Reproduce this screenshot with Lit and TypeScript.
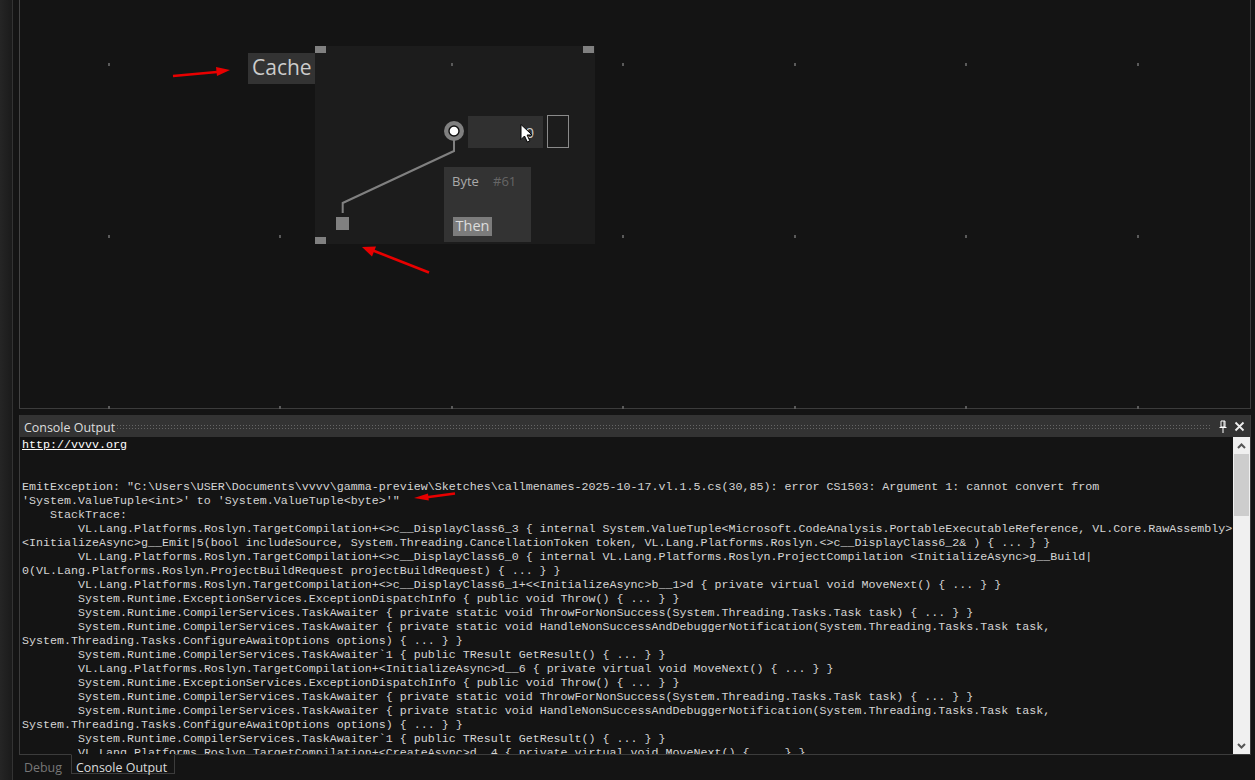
import { LitElement, html, css, svg } from "lit";
import { customElement } from "lit/decorators.js";

const LINES: [number, string][] = [
  [0, ""],
  [0, ""],
  [0, `EmitException: "C:\\Users\\USER\\Documents\\vvvv\\gamma-preview\\Sketches\\callmenames-2025-10-17.vl.1.5.cs(30,85): error CS1503: Argument 1: cannot convert from`],
  [0, `'System.ValueTuple<int>' to 'System.ValueTuple<byte>'"`],
  [4, `StackTrace:`],
  [8, `VL.Lang.Platforms.Roslyn.TargetCompilation+<>c__DisplayClass6_3 { internal System.ValueTuple<Microsoft.CodeAnalysis.PortableExecutableReference, VL.Core.RawAssembly>`],
  [0, `<InitializeAsync>g__Emit|5(bool includeSource, System.Threading.CancellationToken token, VL.Lang.Platforms.Roslyn.<>c__DisplayClass6_2& ) { ... } }`],
  [8, `VL.Lang.Platforms.Roslyn.TargetCompilation+<>c__DisplayClass6_0 { internal VL.Lang.Platforms.Roslyn.ProjectCompilation <InitializeAsync>g__Build|`],
  [0, `0(VL.Lang.Platforms.Roslyn.ProjectBuildRequest projectBuildRequest) { ... } }`],
  [8, `VL.Lang.Platforms.Roslyn.TargetCompilation+<>c__DisplayClass6_1+<<InitializeAsync>b__1>d { private virtual void MoveNext() { ... } }`],
  [8, `System.Runtime.ExceptionServices.ExceptionDispatchInfo { public void Throw() { ... } }`],
  [8, `System.Runtime.CompilerServices.TaskAwaiter { private static void ThrowForNonSuccess(System.Threading.Tasks.Task task) { ... } }`],
  [8, `System.Runtime.CompilerServices.TaskAwaiter { private static void HandleNonSuccessAndDebuggerNotification(System.Threading.Tasks.Task task,`],
  [0, `System.Threading.Tasks.ConfigureAwaitOptions options) { ... } }`],
  [8, `System.Runtime.CompilerServices.TaskAwaiter\`1 { public TResult GetResult() { ... } }`],
  [8, `VL.Lang.Platforms.Roslyn.TargetCompilation+<InitializeAsync>d__6 { private virtual void MoveNext() { ... } }`],
  [8, `System.Runtime.ExceptionServices.ExceptionDispatchInfo { public void Throw() { ... } }`],
  [8, `System.Runtime.CompilerServices.TaskAwaiter { private static void ThrowForNonSuccess(System.Threading.Tasks.Task task) { ... } }`],
  [8, `System.Runtime.CompilerServices.TaskAwaiter { private static void HandleNonSuccessAndDebuggerNotification(System.Threading.Tasks.Task task,`],
  [0, `System.Threading.Tasks.ConfigureAwaitOptions options) { ... } }`],
  [8, `System.Runtime.CompilerServices.TaskAwaiter\`1 { public TResult GetResult() { ... } }`],
  [8, `VL.Lang.Platforms.Roslyn.TargetCompilation+<CreateAsync>d__4 { private virtual void MoveNext() { ... } }`],
];

const XS = [108, 279, 451, 622, 794, 965, 1137];

@customElement("app-root")
export class AppRoot extends LitElement {
  static styles = css`
    :host { display: block; width: 1255px; height: 780px; background: #141414; overflow: hidden; position: relative; font-family: "Open Sans", "DejaVu Sans", sans-serif; }
    .page { display: flex; height: 780px; }
    .gutter { width: 12px; border-right: 1px solid #333; background: linear-gradient(90deg, #252525, #1b1b1b); flex: none; }
    .gap { width: 6px; flex: none; }
    .main { width: 1232px; flex: none; display: flex; flex-direction: column; }
    .canvas { height: 409px; flex: none; box-sizing: border-box; border-left: 1px solid #444; border-right: 1px solid #3c3c3c; border-bottom: 1px solid #3c3c3c; }
    .dot { position: absolute; width: 2px; height: 3px; background: #5a5a5a; }
    .panel { margin-top: 6px; height: 340px; flex: none; box-sizing: border-box; display: flex; flex-direction: column; border-left: 1px solid #3c3c3c; border-right: 1px solid #3c3c3c; border-bottom: 1px solid #3c3c3c; }
    .head { height: 22px; flex: none; background: #333; display: flex; align-items: center; padding-left: 4px; color: #ddd; font-size: 12.45px; }
    .title { padding-top: 2px; }
    .grip { flex: 1; height: 6px; margin: 1px 6px 0 1px; background-image: radial-gradient(#666 0.7px, transparent 0.8px); background-size: 3px 3px; }
    .headicons { display: flex; gap: 6px; align-items: center; padding-right: 5px; }
    .body { flex: 1; display: flex; min-height: 0; }
    .log { flex: 1; min-width: 0; overflow: hidden; padding: 1px 0 0 2px; font-family: "Liberation Mono", monospace; font-size: 11.67px; line-height: 14px; color: #d4d4d4; background: #141414; }
    .log a { color: #fff; text-decoration: underline; }
    .row { height: 14px; white-space: pre; }
    .bar { width: 17px; flex: none; background: #f0f0f0; display: flex; flex-direction: column; align-items: center; }
    .arrow { height: 17px; flex: none; display: flex; align-items: center; justify-content: center; }
    .thumb { align-self: stretch; margin: 0 1px; height: 62px; background: #cdcdcd; flex: none; }
    .spacer { flex: 1; }
    .tabs { display: flex; height: 20px; flex: none; font-size: 12.45px; }
    .tab { padding: 0 9px 0 5px; color: #777; line-height: 26px; width: 38px; box-sizing: content-box; }
    .tab.on { width: auto; color: #ddd; border: 1px solid #3c3c3c; border-top-color: #141414; margin-top: -1px; background: #141414; line-height: 26px; padding: 0 7px 0 4px; height: 18px; }
    .region { position: absolute; left: 315px; top: 46px; width: 280px; height: 198px; background: #1c1c1c; }
    .cache { position: absolute; background: #333; color: #ccc; left: 248px; top: 53px; width: 67px; height: 31px; font-size: 21px; line-height: 28px; padding-left: 4px; box-sizing: border-box; white-space: nowrap; }
    .handle { position: absolute; width: 11px; height: 7px; background: #808080; }
    .box { position: absolute; left: 468px; top: 116px; width: 75px; height: 32px; background: #303030; color: #ccc; font-size: 15px; line-height: 32px; text-align: right; padding-right: 9px; box-sizing: border-box; }
    .outline { position: absolute; left: 547px; top: 115px; width: 22px; height: 33px; box-sizing: border-box; border: 1px solid #8a8a8a; }
    .card { position: absolute; left: 444px; top: 167px; width: 87px; height: 75px; background: #333; font-size: 13px; color: #aaa; }
    .byte { position: absolute; left: 8px; top: 5px; }
    .num { position: absolute; left: 49px; top: 5px; color: #666; }
    .then { position: absolute; left: 9px; top: 50px; width: 39px; height: 19px; background: #7c7c7c; color: #ddd; font-size: 14.5px; line-height: 17px; text-align: center; }
    .wires { position: absolute; left: 0; top: 0; width: 1255px; height: 520px; pointer-events: none; }
  `;

  private dots() {
    const out = [];
    for (const y of [63, 235, 406]) {
      for (const x of XS) {
        out.push(html`<div class="dot" style="left:${x}px;top:${y}px"></div>`);
      }
    }
    return out;
  }

  render() {
    return html`
      <div class="page">
        <div class="gutter"></div>
        <div class="gap"></div>
        <div class="main">
          <div class="canvas"></div>
          <div class="panel">
            <div class="head">
              <span class="title">Console Output</span>
              <div class="grip"></div>
              <div class="headicons">
                <svg width="10" height="13" viewBox="0 0 10 13"><path d="M3 1h4v6H3zM1.5 7.5h7M5 8v5M6 1v6" fill="none" stroke="#fff" stroke-width="1"/></svg>
                <svg width="11" height="11" viewBox="0 0 11 11"><path d="M1.5 1.5l8 8M9.5 1.5l-8 8" fill="none" stroke="#eee" stroke-width="1.8"/></svg>
              </div>
            </div>
            <div class="body">
              <div class="log">
                <div class="row"><a>http://vvvv.org</a></div>
                ${LINES.map(([n, t]) => html`<div class="row">${" ".repeat(n)}${t}</div>`)}
              </div>
              <div class="bar">
                <div class="arrow"><svg width="9" height="6" viewBox="0 0 9 6"><path d="M1 5l3.5-3.5L8 5" fill="none" stroke="#555" stroke-width="2"/></svg></div>
                <div class="thumb"></div>
                <div class="spacer"></div>
                <div class="arrow"><svg width="9" height="6" viewBox="0 0 9 6"><path d="M1 1l3.5 3.5L8 1" fill="none" stroke="#555" stroke-width="2"/></svg></div>
              </div>
            </div>
          </div>
          <div class="tabs">
            <div class="tab">Debug</div>
            <div class="tab on">Console Output</div>
          </div>
        </div>
      </div>

      <div class="region"></div>
      ${this.dots()}
      <div class="handle" style="left:315px;top:46px"></div>
      <div class="handle" style="left:583px;top:46px"></div>
      <div class="handle" style="left:315px;top:237px"></div>
      <div class="cache">Cache</div>
      <div class="box">0</div>
      <div class="outline"></div>
      <div class="card">
        <span class="byte">Byte</span><span class="num">#61</span>
        <div class="then">Then</div>
      </div>
      <svg class="wires" viewBox="0 0 1255 520">
        ${svg`
          <path d="M454 140V151L342.7 203V213" fill="none" stroke="#808080" stroke-width="2"/>
          <circle cx="454" cy="131" r="10" fill="#808080"/>
          <circle cx="454" cy="131" r="5" fill="#fff" stroke="#111" stroke-width="1.4"/>
          <rect x="336" y="217" width="13" height="13" fill="#808080"/>
          <path d="M173 76l44-4" stroke="#e80000" stroke-width="2.6" fill="none"/>
          <path d="M230 70l-14-3 1 9z" fill="#e80000"/>
          <path d="M429 272.500l-56-22" stroke="#e80000" stroke-width="2.6" fill="none"/>
          <path d="M362 247l14-0.500-4 10z" fill="#e80000"/>
          <path d="M455 493.500l-30 4" stroke="#e80000" stroke-width="2.4" fill="none"/>
          <path d="M414 498l14-4.500 0.800 7z" fill="#e80000"/>
          <path d="M521 124.500v15l3.500-3.500 2.800 6 2.500-1.200-2.700-5.800h5z" fill="#fff" stroke="#000" stroke-width="1"/>
        `}
      </svg>
    `;
  }
}
